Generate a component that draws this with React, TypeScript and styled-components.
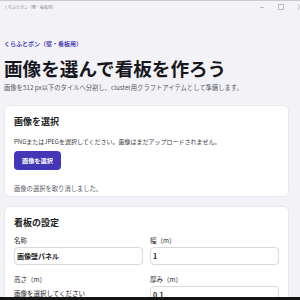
import React from "react";
import styled, { createGlobalStyle } from "styled-components";

const GlobalStyle = createGlobalStyle`
  html, body {
    margin: 0;
    padding: 0;
    background: #f3f3f7;
    overflow: hidden;
  }
  * {
    box-sizing: border-box;
  }
`;

const App = () => {
  return (
    <Window>
      <GlobalStyle />
      <TitleBar>
        <WindowTitle>くらふとボン（壁・看板用）</WindowTitle>
        <Controls>
          <ControlButton>
            <svg width="6" height="6" viewBox="0 0 6 6">
              <path d="M1 3.5h4" stroke="#a5a5ab" strokeWidth="0.7" />
            </svg>
          </ControlButton>
          <ControlButton>
            <svg width="6" height="6" viewBox="0 0 6 6">
              <rect x="0.5" y="0.5" width="5" height="5" fill="none" stroke="#a5a5ab" strokeWidth="0.7" />
            </svg>
          </ControlButton>
          <ControlButton>
            <svg width="6" height="6" viewBox="0 0 6 6">
              <path d="M0.5 0.5l5 5M5.5 0.5l-5 5" stroke="#a5a5ab" strokeWidth="0.7" />
            </svg>
          </ControlButton>
        </Controls>
      </TitleBar>
      <Main>
        <AppName>くらふとボン（壁・看板用）</AppName>
        <Heading>画像を選んで看板を作ろう</Heading>
        <Lead>
          画像を512 px以下のタイルへ分割し、cluster用クラフトアイテムとして準備します。
        </Lead>
        <Card>
          <CardTitle>画像を選択</CardTitle>
          <Hint>
            PNGまたはJPEGを選択してください。画像はまだアップロードされません。
          </Hint>
          <PrimaryButton type="button">画像を選択</PrimaryButton>
          <Status>画像の選択を取り消しました。</Status>
        </Card>
        <Card>
          <CardTitle>看板の設定</CardTitle>
          <FieldGrid>
            <Field>
              <FieldLabel>名称</FieldLabel>
              <TextInput defaultValue="画像壁パネル" />
            </Field>
            <Field>
              <FieldLabel>幅（m）</FieldLabel>
              <TextInput defaultValue="1" />
            </Field>
            <Field>
              <FieldLabel>高さ（m）</FieldLabel>
              <PlainValue>画像を選択してください</PlainValue>
            </Field>
            <Field>
              <FieldLabel>厚み（m）</FieldLabel>
              <TextInput defaultValue="0.1" />
            </Field>
          </FieldGrid>
        </Card>
      </Main>
      <BottomEdge />
    </Window>
  );
};

export default App;

const Window = styled.div`
  width: 300px;
  height: 300px;
  display: flex;
  flex-direction: column;
  overflow: hidden;
  font-family: "Noto Sans CJK JP", "Noto Sans", sans-serif;
  color: #1b1b22;
  border-top: 1px solid #c9c9cf;
`;

const TitleBar = styled.div`
  height: 11px;
  display: flex;
  align-items: center;
  justify-content: space-between;
  padding-left: 4px;
  flex-shrink: 0;
`;

const WindowTitle = styled.span`
  font-size: 4px;
  line-height: 6px;
  color: #8a8a92;
`;

const Controls = styled.div`
  display: flex;
  align-items: center;
  gap: 13px;
  margin-right: -3px;
`;

const ControlButton = styled.span`
  display: flex;
  width: 6px;
  height: 6px;
`;

const Main = styled.main`
  padding: 27px 11px 0 4px;
  display: flex;
  flex-direction: column;
`;

const AppName = styled.div`
  font-size: 6px;
  font-weight: 700;
  color: #4b44b8;
  line-height: 10px;
`;

const Heading = styled.h1`
  margin: 6px 0 0;
  font-size: 18.6px;
  font-weight: 700;
  line-height: 26px;
  color: #17171d;
`;

const Lead = styled.p`
  margin: 2px 0 0;
  font-size: 6.3px;
  color: #55555e;
  line-height: 10px;
`;

const Card = styled.section`
  margin-top: 12px;
  background: #ffffff;
  border: 1px solid #e8e8ee;
  border-radius: 6px;
  padding: 10px 9px 2px;
  display: flex;
  flex-direction: column;
  align-items: flex-start;

  & + & {
    margin-top: 9px;
  }
`;

const CardTitle = styled.h2`
  margin: 0;
  font-size: 9px;
  font-weight: 700;
  line-height: 12px;
  color: #1b1b22;
`;

const Hint = styled.p`
  margin: 9px 0 0;
  font-size: 6px;
  line-height: 10px;
  color: #3c3c44;
`;

const PrimaryButton = styled.button`
  margin-top: 4px;
  height: 19px;
  padding: 0 8px;
  border: none;
  border-radius: 4px;
  background: #4337b8;
  color: #ffffff;
  font-family: inherit;
  font-size: 6.2px;
  font-weight: 700;
`;

const Status = styled.p`
  margin: 14px 0 0;
  font-size: 6.3px;
  line-height: 10px;
  color: #5a5a63;
`;

const FieldGrid = styled.div`
  margin-top: 6px;
  width: 100%;
  display: grid;
  grid-template-columns: 1fr 1fr;
  column-gap: 7px;
  row-gap: 9px;
`;

const Field = styled.label`
  display: flex;
  flex-direction: column;
  gap: 2px;
`;

const FieldLabel = styled.span`
  font-size: 6.5px;
  line-height: 10px;
  color: #2a2a31;
`;

const TextInput = styled.input`
  height: 18px;
  width: 100%;
  padding: 0 2px;
  border: 1px solid #d8d8df;
  border-radius: 4px;
  background: #ffffff;
  font-family: inherit;
  font-size: 7px;
  font-weight: 700;
  color: #1b1b22;
  outline: none;
`;

const PlainValue = styled.span`
  margin-top: 1px;
  font-size: 6.5px;
  line-height: 12px;
  color: #1b1b22;
`;

const BottomEdge = styled.div`
  position: fixed;
  left: 0;
  right: 0;
  bottom: 0;
  height: 3px;
  background: #141414;
`;
